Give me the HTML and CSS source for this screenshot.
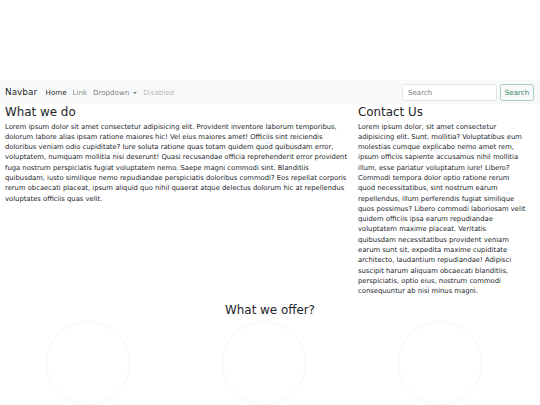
FILE: index.html
```html
<!DOCTYPE html>
<html lang="en">
<head>
<meta charset="utf-8">
<title>Navbar</title>
<link rel="stylesheet" href="styles.css">
</head>
<body>
<div class="top-space"></div>
<nav class="navbar">
  <a class="brand" href="#">Navbar</a>
  <ul class="nav">
    <li><a class="nav-link active" href="#">Home</a></li>
    <li><a class="nav-link" href="#">Link</a></li>
    <li><a class="nav-link dropdown" href="#">Dropdown<span class="caret"></span></a></li>
    <li><a class="nav-link disabled" href="#">Disabled</a></li>
  </ul>
  <form class="search">
    <input class="search-input" type="search" placeholder="Search">
    <button class="search-btn" type="button">Search</button>
  </form>
</nav>
<main class="content">
  <section class="col-main">
    <h2 class="heading">What we do</h2>
    <p class="text">Lorem ipsum dolor sit amet consectetur adipisicing elit. Provident inventore laborum temporibus, dolorum labore alias ipsam ratione maiores hic! Vel eius maiores amet! Officiis sint reiciendis doloribus veniam odio cupiditate? Iure soluta ratione quas totam quidem quod quibusdam error, voluptatem, numquam mollitia nisi deserunt! Quasi recusandae officia reprehenderit error provident fuga nostrum perspiciatis fugiat voluptatem nemo. Saepe magni commodi sint. Blanditiis quibusdam, iusto similique nemo repudiandae perspiciatis doloribus commodi? Eos repellat corporis rerum obcaecati placeat, ipsum aliquid quo nihil quaerat atque delectus dolorum hic at repellendus voluptates officiis quas velit.</p>
  </section>
  <section class="col-side">
    <h2 class="heading">Contact Us</h2>
    <p class="text">Lorem ipsum dolor, sit amet consectetur adipisicing elit. Sunt, mollitia? Voluptatibus eum molestias cumque explicabo nemo amet rem, ipsum officiis sapiente accusamus nihil mollitia illum, esse pariatur voluptatum iure! Libero? Commodi tempora dolor optio ratione rerum quod necessitatibus, sint nostrum earum repellendus, illum perferendis fugiat similique quos possimus? Libero commodi laboriosam velit quidem officiis ipsa earum repudiandae voluptatem maxime placeat. Veritatis quibusdam necessitatibus provident veniam earum sunt sit, expedita maxime cupiditate architecto, laudantium repudiandae! Adipisci suscipit harum aliquam obcaecati blanditiis, perspiciatis, optio eius, nostrum commodi consequuntur ab nisi minus magni.</p>
  </section>
</main>
<section class="offer">
  <h2 class="heading offer-title">What we offer?</h2>
  <div class="offer-row">
    <div class="offer-item"><svg class="circle" width="86" height="86" viewBox="0 0 86 86"><circle cx="43" cy="43" r="41.5" fill="none" stroke="#e6e6e6" stroke-width="0.4"/></svg></div>
    <div class="offer-item"><svg class="circle" width="86" height="86" viewBox="0 0 86 86"><circle cx="43" cy="43" r="41.5" fill="none" stroke="#e6e6e6" stroke-width="0.4"/></svg></div>
    <div class="offer-item"><svg class="circle" width="86" height="86" viewBox="0 0 86 86"><circle cx="43" cy="43" r="41.5" fill="none" stroke="#e6e6e6" stroke-width="0.4"/></svg></div>
  </div>
</section>
</body>
</html>
```

FILE: styles.css
```css
* { box-sizing: border-box; }
html, body { margin: 0; padding: 0; }
body {
  font-family: "DejaVu Sans", "Liberation Sans", sans-serif;
  color: #212529;
  background: #fff;
  overflow: hidden;
}
.top-space { height: 80px; }
.navbar {
  display: flex;
  align-items: center;
  height: 24px;
  padding: 0 6px 0 5px;
  background: #f8f9fa;
}
.brand {
  font-size: 8.9px;
  color: rgba(0,0,0,.9);
  text-decoration: none;
  margin-right: 5.5px;
}
.nav {
  display: flex;
  list-style: none;
  margin: 0;
  padding: 0;
}
.nav-link {
  display: block;
  font-size: 7.1px;
  padding: 0 3px;
  color: rgba(0,0,0,.55);
  text-decoration: none;
}
.nav-link.active { color: rgba(0,0,0,.9); }
.nav-link.disabled { color: rgba(0,0,0,.3); }
.caret {
  display: inline-block;
  margin-left: 4px;
  vertical-align: 1px;
  border-top: 2.2px solid rgba(0,0,0,.55);
  border-left: 2px solid transparent;
  border-right: 2px solid transparent;
}
.search {
  display: flex;
  margin: 0 0 0 auto;
}
.search-input {
  width: 95px;
  height: 17px;
  margin: 0;
  padding: 0 5px;
  font-family: inherit;
  font-size: 7.1px;
  color: #212529;
  border: 1px solid #e3e6e9;
  border-radius: 2.6px;
  background: #fff;
  outline: none;
}
.search-input::placeholder { color: #7b8288; }
.search-btn {
  margin-left: 3px;
  height: 17px;
  width: 34px;
  padding: 0;
  font-family: inherit;
  font-size: 7.1px;
  color: #2f8a5f;
  background: transparent;
  border: 1px solid #a6d0bb;
  border-radius: 2.6px;
}
.content {
  display: grid;
  grid-template-columns: 353px 1fr;
}
.col-main { padding: 0 5px; }
.col-side { padding: 0 14.5px 0 5px; }
.heading {
  margin: 0 0 1.5px;
  font-size: 11.9px;
  font-weight: 400;
  line-height: 16px;
  color: #212529;
}
.text {
  margin: 0 0 5px;
  font-size: 6.8px;
  line-height: 10.3px;
}
.offer { text-align: center; }
.offer-title { margin: 0 0 1px; line-height: 17px; }
.offer-row {
  display: grid;
  grid-template-columns: repeat(3, 176px);
}
.offer-item { display: flex; justify-content: center; }
.circle { display: block; }
```
